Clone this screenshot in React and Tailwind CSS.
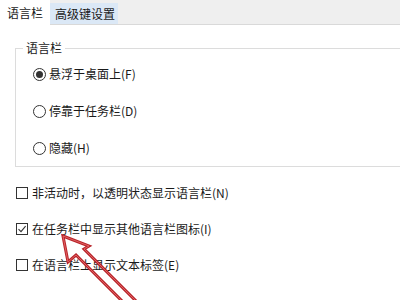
import React from "react";

function Radio({ checked, label }) {
  return (
    <div className="flex h-[16px] items-center gap-[3px]">
      <span className="flex h-[13px] w-[13px] items-center justify-center rounded-full border border-[#333333] bg-white">
        {checked && <span className="h-[7px] w-[7px] rounded-full bg-[#333333]" />}
      </span>
      <span className="leading-[16px]">{label}</span>
    </div>
  );
}

function Check({ checked, label }) {
  return (
    <div className="flex h-[16px] items-center gap-[4px]">
      <span className="flex h-[12px] w-[12px] items-center justify-center border border-[#333333] bg-white">
        {checked && (
          <svg width="10" height="10" viewBox="0 0 10 10">
            <path d="M1.5 5.2 L4 7.6 L8.6 2.2" fill="none" stroke="#333333" strokeWidth="1.1" />
          </svg>
        )}
      </span>
      <span className="leading-[16px]">{label}</span>
    </div>
  );
}

export default function App() {
  return (
    <div
      className="relative h-[300px] w-[400px] overflow-hidden bg-white text-[12px] text-[#1a1a1a]"
      style={{ fontFamily: '"Noto Sans CJK SC", "Noto Sans", sans-serif' }}
    >
      <div className="flex h-[25px] items-end border-b border-[#d9d9d9] bg-[#efefef]">
        <div className="-mb-px flex h-[25px] w-[50px] items-center bg-white pl-[7px] leading-[16px]">
          语言栏
        </div>
        <div className="flex h-[21px] w-[68px] items-center bg-[#dbe8f6] pl-[5px] leading-[16px]">
          高级键设置
        </div>
      </div>

      <div className="pl-[15px] pt-[23px]">
        <div className="relative h-[119px] w-[420px] border border-[#dcdcdc]">
          <span className="absolute left-[7px] top-[-9px] bg-white px-[3px] leading-[16px]">
            语言栏
          </span>
          <div className="flex flex-col gap-[21px] pl-[17px] pt-[17px]">
            <Radio checked label="悬浮于桌面上(F)" />
            <Radio label="停靠于任务栏(D)" />
            <Radio label="隐藏(H)" />
          </div>
        </div>
      </div>

      <div className="flex flex-col gap-[20px] pl-[16px] pt-[18px]">
        <Check label="非活动时，以透明状态显示语言栏(N)" />
        <Check checked label="在任务栏中显示其他语言栏图标(I)" />
        <Check label="在语言栏上显示文本标签(E)" />
      </div>

      <svg
        className="pointer-events-none absolute left-0 top-0"
        width="400"
        height="300"
        viewBox="0 0 400 300"
      >
        <polygon
          points="63,236 89,246 84,249 140,305 126,305 76,255 68,262"
          fill="none"
          stroke="#b8242a"
          strokeWidth="3"
          strokeLinejoin="miter"
        />
        <polygon
          points="63,236 89,246 84,249 140,305 126,305 76,255 68,262"
          fill="none"
          stroke="#e87070"
          strokeWidth="0.8"
          strokeLinejoin="miter"
        />
      </svg>
    </div>
  );
}
